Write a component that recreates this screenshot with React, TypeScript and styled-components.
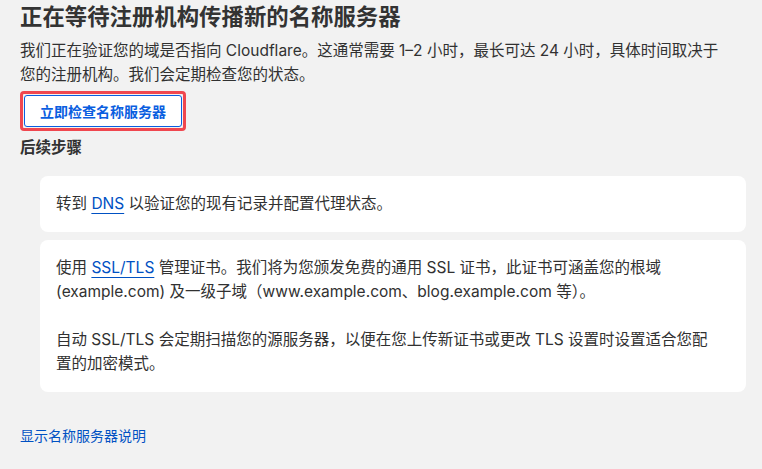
import { createGlobalStyle } from 'styled-components'
import styled from 'styled-components'

const GlobalStyle = createGlobalStyle`
  html, body {
    margin: 0;
    padding: 0;
    background: #f2f2f2;
  }
  body {
    font-family: Inter, "Noto Sans CJK SC", sans-serif;
    color: #313131;
  }
`

const Page = styled.main`
  padding: 1px 16px 20px 20px;
  width: 762px;
  box-sizing: border-box;
`

const Title = styled.h1`
  margin: 0;
  font-size: 22.4px;
  line-height: 32px;
  font-weight: 700;
  color: #333333;
`

const Intro = styled.p`
  margin: 6px 0 0;
  max-width: 712px;
  font-size: 15.5px;
  line-height: 24px;
`

const Highlight = styled.div`
  display: inline-block;
  margin-top: 4px;
  padding: 1px;
  border: 3px solid #f0474f;
  border-radius: 4px;
`

const CheckButton = styled.button`
  display: block;
  height: 32px;
  padding: 0 15px;
  background: #ffffff;
  border: 1px solid #0a5ee0;
  border-radius: 3px;
  font-family: inherit;
  font-size: 14px;
  font-weight: 600;
  color: #0a5ee0;
  cursor: pointer;
`

const SectionTitle = styled.h2`
  margin: 5px 0 0;
  font-size: 15.5px;
  line-height: 24px;
  font-weight: 600;
`

const Steps = styled.div`
  display: flex;
  flex-direction: column;
  gap: 8px;
  margin: 16px 0 0 20px;
`

const Card = styled.div`
  background: #ffffff;
  border-radius: 8px;
  padding: 16px 30px 16px 16px;
  font-size: 15.5px;
  line-height: 24px;
`

const CardText = styled.p`
  margin: 0;
  & + & {
    margin-top: 24px;
  }
`

const Link = styled.a`
  color: #0051c3;
  text-decoration: underline;
  text-underline-offset: 4px;
  text-decoration-thickness: 1px;
`

const FooterLink = styled.a`
  display: inline-block;
  margin-top: 33px;
  font-size: 14px;
  line-height: 22px;
  color: #0051c3;
  text-decoration: none;
`

export default function App() {
  return (
    <>
      <GlobalStyle />
      <Page>
        <Title>正在等待注册机构传播新的名称服务器</Title>
        <Intro>
          我们正在验证您的域是否指向 Cloudflare。这通常需要 1–2 小时，最长可达 24 小时，具体时间取决于您的注册机构。我们会定期检查您的状态。
        </Intro>
        <Highlight>
          <CheckButton>立即检查名称服务器</CheckButton>
        </Highlight>
        <SectionTitle>后续步骤</SectionTitle>
        <Steps>
          <Card>
            <CardText>
              转到 <Link href="#">DNS</Link> 以验证您的现有记录并配置代理状态。
            </CardText>
          </Card>
          <Card>
            <CardText>
              使用 <Link href="#">SSL/TLS</Link> 管理证书。我们将为您颁发免费的通用 SSL 证书，此证书可涵盖您的根域 (example.com) 及一级子域（www.example.com、blog.example.com 等）。
            </CardText>
            <CardText>
              自动 SSL/TLS 会定期扫描您的源服务器，以便在您上传新证书或更改 TLS 设置时设置适合您配置的加密模式。
            </CardText>
          </Card>
        </Steps>
        <FooterLink href="#">显示名称服务器说明</FooterLink>
      </Page>
    </>
  )
}
